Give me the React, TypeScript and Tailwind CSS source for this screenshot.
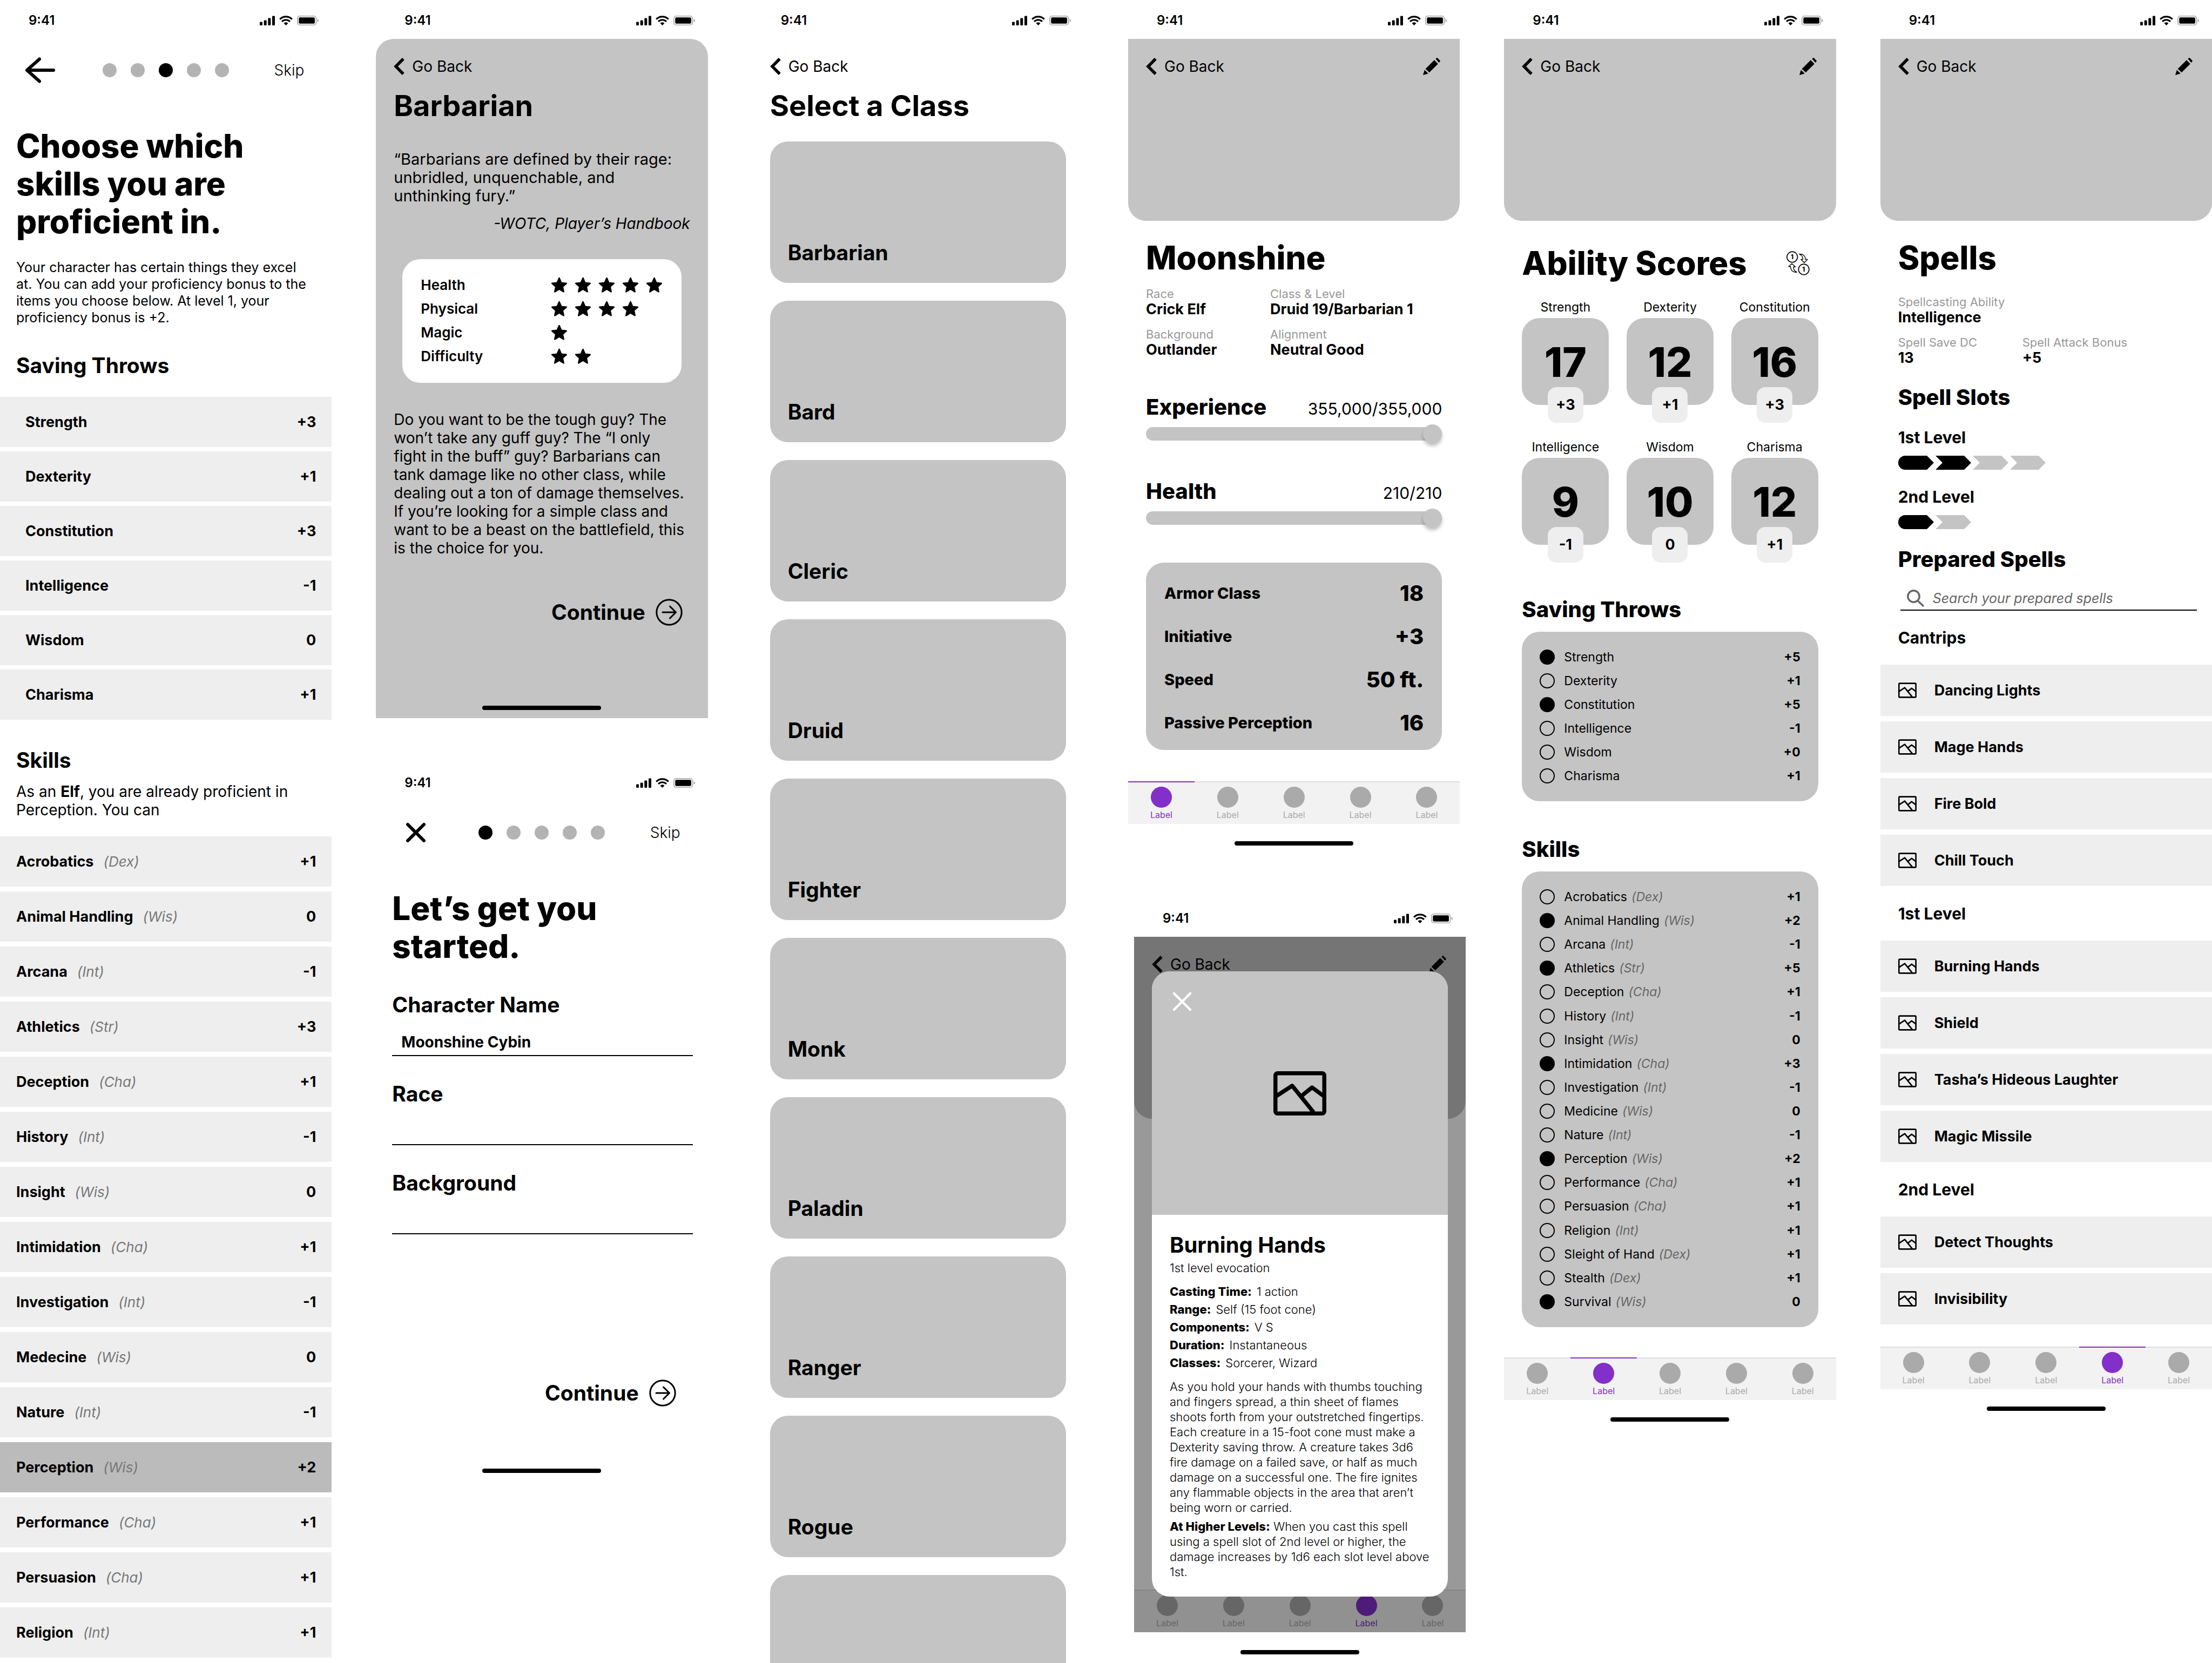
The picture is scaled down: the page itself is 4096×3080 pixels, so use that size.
import React from "react";

type Skill = { name: string; ability?: string; value: string; on?: boolean };

const savingThrowPicks: Skill[] = [
  { name: "Strength", value: "+3" },
  { name: "Dexterity", value: "+1" },
  { name: "Constitution", value: "+3" },
  { name: "Intelligence", value: "-1" },
  { name: "Wisdom", value: "0" },
  { name: "Charisma", value: "+1" },
];

const skillPicks: Skill[] = [
  { name: "Acrobatics", ability: "Dex", value: "+1" },
  { name: "Animal Handling", ability: "Wis", value: "0" },
  { name: "Arcana", ability: "Int", value: "-1" },
  { name: "Athletics", ability: "Str", value: "+3" },
  { name: "Deception", ability: "Cha", value: "+1" },
  { name: "History", ability: "Int", value: "-1" },
  { name: "Insight", ability: "Wis", value: "0" },
  { name: "Intimidation", ability: "Cha", value: "+1" },
  { name: "Investigation", ability: "Int", value: "-1" },
  { name: "Medecine", ability: "Wis", value: "0" },
  { name: "Nature", ability: "Int", value: "-1" },
  { name: "Perception", ability: "Wis", value: "+2", on: true },
  { name: "Performance", ability: "Cha", value: "+1" },
  { name: "Persuasion", ability: "Cha", value: "+1" },
  { name: "Religion", ability: "Int", value: "+1" },
];

const classes = ["Barbarian", "Bard", "Cleric", "Druid", "Fighter", "Monk", "Paladin", "Ranger", "Rogue"];

const ratings = [
  { label: "Health", stars: 5 },
  { label: "Physical", stars: 4 },
  { label: "Magic", stars: 1 },
  { label: "Difficulty", stars: 2 },
];

const combatStats = [
  { label: "Armor Class", value: "18" },
  { label: "Initiative", value: "+3" },
  { label: "Speed", value: "50 ft." },
  { label: "Passive Perception", value: "16" },
];

const abilities = [
  { label: "Strength", score: "17", mod: "+3" },
  { label: "Dexterity", score: "12", mod: "+1" },
  { label: "Constitution", score: "16", mod: "+3" },
  { label: "Intelligence", score: "9", mod: "-1" },
  { label: "Wisdom", score: "10", mod: "0" },
  { label: "Charisma", score: "12", mod: "+1" },
];

const savingThrows: Skill[] = [
  { name: "Strength", value: "+5", on: true },
  { name: "Dexterity", value: "+1" },
  { name: "Constitution", value: "+5", on: true },
  { name: "Intelligence", value: "-1" },
  { name: "Wisdom", value: "+0" },
  { name: "Charisma", value: "+1" },
];

const skills: Skill[] = [
  { name: "Acrobatics", ability: "Dex", value: "+1" },
  { name: "Animal Handling", ability: "Wis", value: "+2", on: true },
  { name: "Arcana", ability: "Int", value: "-1" },
  { name: "Athletics", ability: "Str", value: "+5", on: true },
  { name: "Deception", ability: "Cha", value: "+1" },
  { name: "History", ability: "Int", value: "-1" },
  { name: "Insight", ability: "Wis", value: "0" },
  { name: "Intimidation", ability: "Cha", value: "+3", on: true },
  { name: "Investigation", ability: "Int", value: "-1" },
  { name: "Medicine", ability: "Wis", value: "0" },
  { name: "Nature", ability: "Int", value: "-1" },
  { name: "Perception", ability: "Wis", value: "+2", on: true },
  { name: "Performance", ability: "Cha", value: "+1" },
  { name: "Persuasion", ability: "Cha", value: "+1" },
  { name: "Religion", ability: "Int", value: "+1" },
  { name: "Sleight of Hand", ability: "Dex", value: "+1" },
  { name: "Stealth", ability: "Dex", value: "+1" },
  { name: "Survival", ability: "Wis", value: "0", on: true },
];

const spellGroups = [
  { title: "Cantrips", spells: ["Dancing Lights", "Mage Hands", "Fire Bold", "Chill Touch"] },
  { title: "1st Level", spells: ["Burning Hands", "Shield", "Tasha’s Hideous Laughter", "Magic Missile"] },
  { title: "2nd Level", spells: ["Detect Thoughts", "Invisibility"] },
];

const spellFacts = [
  { label: "Casting Time:", value: "1 action" },
  { label: "Range:", value: "Self (15 foot cone)" },
  { label: "Components:", value: "V S" },
  { label: "Duration:", value: "Instantaneous" },
  { label: "Classes:", value: "Sorcerer, Wizard" },
];

/* ---------- icons ---------- */

function ArrowLeftIcon() {
  return (
    <svg className="h-[48px] w-[56px]" viewBox="0 0 56 48" fill="none" stroke="#000" strokeWidth="6" strokeLinecap="round" strokeLinejoin="round" aria-hidden="true">
      <path d="M27 3.5 4 24l23 20.5M5 24h48" />
    </svg>
  );
}

function CrossIcon({ color, weight }: { color: string; weight: number }) {
  return (
    <svg className="size-[38px]" viewBox="0 0 38 38" fill="none" stroke={color} strokeWidth={weight} strokeLinecap="round" aria-hidden="true">
      <path d="M4 4l30 30M34 4 4 34" />
    </svg>
  );
}

function ChevronIcon() {
  return (
    <svg className="h-[32px] w-[20px]" viewBox="0 0 20 32" fill="none" stroke="#000" strokeWidth="5.5" aria-hidden="true">
      <path d="M17.8 2 4 16l13.8 14" />
    </svg>
  );
}

function PencilIcon() {
  return (
    <svg className="size-[32px]" viewBox="0 0 32 32" fill="#000" aria-hidden="true">
      <path d="M20.9 4.2l6.9 7L11.7 27.2l-7.1-6.7zM23.4 2.1l1.6-1.6q1-1 2 0l4.4 4.6q.9 1 0 1.9l-1.9 1.9zM2.9 22.4l6.9 6.8L0 32z" />
    </svg>
  );
}

function ArrowCircleIcon() {
  return (
    <svg className="size-[50px]" viewBox="0 0 50 50" fill="none" stroke="#000" strokeWidth="3" strokeLinecap="round" strokeLinejoin="round" aria-hidden="true">
      <circle cx="25" cy="25" r="23.2" />
      <path d="M13 25h24.5M26.5 14 37.5 25l-11 11" />
    </svg>
  );
}

function StarIcon() {
  return (
    <svg className="size-[31px]" viewBox="0 0 31 31" fill="#000" stroke="#000" strokeWidth="2.6" strokeLinejoin="round" aria-hidden="true">
      <path d="M15.5 2l3.8 8.7 9.5 1-7.1 6.3 2 9.3-8.2-4.8-8.2 4.8 2-9.3-7.1-6.3 9.5-1z" />
    </svg>
  );
}

function ImageIcon({ className }: { className: string }) {
  return (
    <svg className={className} viewBox="0 0 98 82" fill="none" stroke="#000" strokeWidth="7.5" strokeLinejoin="round" aria-hidden="true">
      <rect x="3.75" y="3.75" width="90.5" height="74.5" rx="4" />
      <path d="M4 47l30.700-20.200L74.400 76M51.400 46.400 71.500 30 94.500 47" />
    </svg>
  );
}

function SearchIcon() {
  return (
    <svg className="size-[32px]" viewBox="0 0 32 32" fill="none" stroke="#666" strokeWidth="3.4" aria-hidden="true">
      <circle cx="12.500" cy="12.500" r="10.700" />
      <path d="M20 20.500l11 10.500" />
    </svg>
  );
}

function SwapIcon() {
  return (
    <svg className="h-[45px] w-[43px]" viewBox="53 53 158 164" fill="none" stroke="#000" strokeWidth="6" strokeLinejoin="round" aria-hidden="true">
      <circle cx="92.500" cy="92.500" r="36" />
      <circle cx="171" cy="177" r="36" />
      <path strokeWidth="5" d="M140 73c24-3 42 12 42 36h14l-22 22-22-22h13c0-16-8-29-25-36zM124 196c-25 3-43-12-43-38H68l22-20 24 22h-13c-1 16 7 29 23 36z" />
      <text x="92" y="107" textAnchor="middle" fill="#000" stroke="none" fontFamily="Inter, sans-serif" fontWeight="800" fontSize="42">1</text>
      <text x="170" y="191" textAnchor="middle" fill="#000" stroke="none" fontFamily="Inter, sans-serif" fontWeight="800" fontSize="42">1</text>
    </svg>
  );
}

function SlotShape({ first, filled }: { first: boolean; filled: boolean }) {
  return (
    <svg className="h-[26px] w-[66px]" viewBox="0 0 66 26" fill={filled ? "#000" : "#c4c4c4"} aria-hidden="true">
      <path d={first ? "M13 0h40l13 13-13 13H13A13 13 0 0 1 13 0z" : "M0 0h53l13 13-13 13H0l13-13z"} />
    </svg>
  );
}

/* ---------- shared pieces ---------- */

function StatusBar() {
  return (
    <div className="flex h-[72px] items-center justify-between pt-[3px] pr-[24px] pl-[53px]">
      <span className="text-[24px] leading-[30px] font-semibold">9:41</span>
      <div className="flex items-center gap-[8px]">
        <svg className="h-[18px] w-[28px]" viewBox="0 0 28 18" aria-hidden="true">
          <rect x="0" y="11.500" width="5" height="6.500" rx="1.300" />
          <rect x="7.700" y="8.500" width="5" height="9.500" rx="1.300" />
          <rect x="15.300" y="4.500" width="5" height="13.500" rx="1.300" />
          <rect x="23" y="0.500" width="5" height="17.500" rx="1.300" />
        </svg>
        <svg className="h-[18px] w-[25px]" viewBox="0 0 25 18" fill="none" stroke="#000" strokeWidth="3.100" aria-hidden="true">
          <path d="M1.200 6.600A15.800 15.800 0 0 1 23.800 6.600M5.100 11A10.200 10.200 0 0 1 19.900 11" />
          <path d="M12.500 18 8.500 14A5.600 5.600 0 0 1 16.500 14z" fill="#000" stroke="none" />
        </svg>
        <svg className="h-[18px] w-[40px]" viewBox="0 0 40 18" aria-hidden="true">
          <rect x="0.800" y="0.800" width="34.600" height="16.400" rx="4.200" fill="none" stroke="#a6a6a6" strokeWidth="1.600" />
          <rect x="3.300" y="3.300" width="29.600" height="11.400" rx="2" />
          <path d="M37.500 6v6q2.500-.8 2.500-3t-2.500-3z" fill="#a6a6a6" />
        </svg>
      </div>
    </div>
  );
}

function HomeIndicator() {
  return <div className="mx-auto h-[8px] w-[220px] rounded-full bg-black" />;
}

function GoBack() {
  return (
    <button type="button" className="flex h-[36px] items-center gap-[14px] text-[28px] leading-[36px]">
      <ChevronIcon />
      Go Back
    </button>
  );
}

function StepNav({ icon, label, step }: { icon: React.ReactNode; label: string; step: number }) {
  return (
    <nav className="grid h-[114px] grid-cols-[1fr_auto_1fr] items-center px-[46px] pt-[2px]">
      <button type="button" aria-label={label} className="flex w-[56px] justify-center">{icon}</button>
      <ol className="flex gap-[26px]">
        {[0, 1, 2, 3, 4].map((i) => (
          <li key={i} className={i === step ? "size-[26px] rounded-full bg-black" : "size-[26px] rounded-full bg-[#b3b3b3]"} />
        ))}
      </ol>
      <button type="button" className="justify-self-end pr-[5px] text-[28px] leading-[36px] font-light">Skip</button>
    </nav>
  );
}

function HeroHeader() {
  return (
    <header className="flex h-[337px] items-start justify-between rounded-b-[33px] bg-[#c4c4c4] pt-[33px] pr-[36px] pl-[33px]">
      <GoBack />
      <button type="button" aria-label="Edit" className="flex h-[36px] items-center">
        <PencilIcon />
      </button>
    </header>
  );
}

function TabBar({ active }: { active: number }) {
  return (
    <nav className="grid h-[79px] grid-cols-5 bg-[#f2f2f2]">
      {[0, 1, 2, 3, 4].map((i) => (
        <button
          key={i}
          type="button"
          className={
            i === active
              ? "flex flex-col items-center border-t-2 border-[#832fc9] pt-[8px] text-[#832fc9]"
              : "flex flex-col items-center border-t-2 border-[#dedede] pt-[8px] text-[#aaa]"
          }
        >
          <span className="size-[39px] rounded-full bg-current" />
          <span className="mt-[3px] text-[16px] leading-[20px]">Label</span>
        </button>
      ))}
    </nav>
  );
}

function ContinueButton() {
  return (
    <button type="button" className="flex h-[50px] items-center gap-[19px] text-[39px] leading-[48px] font-bold">
      Continue
      <ArrowCircleIcon />
    </button>
  );
}

function PickRow({ skill, inset }: { skill: Skill; inset?: boolean }) {
  return (
    <li>
      <button
        type="button"
        aria-pressed={!!skill.on}
        className={
          (skill.on ? "bg-[#bbb] " : "bg-[#eee] ") +
          (inset ? "pl-[47px] " : "pl-[30px] ") +
          "flex h-[93px] w-full items-center pr-[29px] text-[27px] leading-[32px] font-bold"
        }
      >
        <span>{skill.name}</span>
        {skill.ability && <em className="ml-[18px] text-[26px] font-normal text-[#777]">({skill.ability})</em>}
        <span className="ml-auto">{skill.value}</span>
      </button>
    </li>
  );
}

function CheckRow({ skill, group }: { skill: Skill; group: string }) {
  const id = group + "-" + skill.name.replace(/ /g, "-");
  return (
    <li className="flex h-[28px] items-center text-[23px] leading-[28px]">
      <input
        id={id}
        type="checkbox"
        defaultChecked={skill.on}
        className="size-[28px] appearance-none rounded-full border-2 border-black checked:bg-black"
      />
      <label htmlFor={id} className="ml-[17px] flex gap-[8px]">
        {skill.name}
        {skill.ability && <em className="text-[#666]">({skill.ability})</em>}
      </label>
      <span className="ml-auto font-bold">{skill.value}</span>
    </li>
  );
}

function Fact({ label, value }: { label: string; value: string }) {
  return (
    <div>
      <dt className="text-[22px] leading-[28px] text-[#999]">{label}</dt>
      <dd className="text-[27px] leading-[30px] font-bold">{value}</dd>
    </div>
  );
}

function Meter({ id, label, value, max }: { id: string; label: string; value: string; max: number }) {
  return (
    <div className="px-[33px]">
      <div className="flex h-[48px] items-baseline justify-between">
        <label htmlFor={id} className="text-[40px] leading-[48px] font-extrabold">{label}</label>
        <output className="text-[30px] leading-[40px]">{value}</output>
      </div>
      <input
        id={id}
        type="range"
        min={0}
        max={max}
        defaultValue={max}
        className="mt-[8px] block h-[35px] w-full appearance-none bg-transparent [&::-webkit-slider-runnable-track]:h-[25px] [&::-webkit-slider-runnable-track]:rounded-full [&::-webkit-slider-runnable-track]:bg-[#c4c4c4] [&::-webkit-slider-thumb]:-mt-[5px] [&::-webkit-slider-thumb]:size-[35px] [&::-webkit-slider-thumb]:appearance-none [&::-webkit-slider-thumb]:rounded-full [&::-webkit-slider-thumb]:bg-[#c4c4c4] [&::-webkit-slider-thumb]:shadow-[0_5px_6px_rgba(0,0,0,0.25)]"
      />
    </div>
  );
}

function Field({ id, label, value }: { id: string; label: string; value?: string }) {
  return (
    <div>
      <label htmlFor={id} className="block text-[39px] leading-[48px] font-bold">{label}</label>
      <input
        id={id}
        type="text"
        defaultValue={value}
        className="mt-[21px] block h-[50px] w-full border-b-2 border-black pl-[17px] text-[28px] leading-[32px] font-bold outline-none"
      />
    </div>
  );
}

function SlotRow({ title, total, filled }: { title: string; total: number; filled: number }) {
  return (
    <div className="mt-[32px]">
      <h3 className="text-[30px] leading-[36px] font-bold">{title}</h3>
      <div className="mt-[16px] flex gap-[3px]" role="img" aria-label={`${filled} of ${total} slots`}>
        {Array.from({ length: total }, (_, i) => (
          <SlotShape key={i} first={i === 0} filled={i < filled} />
        ))}
      </div>
    </div>
  );
}

/* ---------- screens ---------- */

function SkillPickerScreen() {
  return (
    <section>
      <StatusBar />
      <StepNav icon={<ArrowLeftIcon />} label="Back" step={2} />
      <h1 className="mt-[49px] px-[30px] text-[60px] leading-[70px] font-extrabold">
        Choose which
        <br />
        skills you are
        <br />
        proficient in.
      </h1>
      <p className="mt-[35px] px-[30px] text-[25px] leading-[31px]">
        Your character has certain things they excel
        <br />
        at. You can add your proficiency bonus to the
        <br />
        items you choose below. At level 1, your
        <br />
        proficiency bonus is +2.
      </p>
      <h2 className="mt-[49px] mb-[34px] px-[30px] text-[39px] leading-[48px] font-bold">Saving Throws</h2>
      <ul className="flex flex-col gap-[8px]">
        {savingThrowPicks.map((s) => (
          <PickRow key={s.name} skill={s} inset />
        ))}
      </ul>
      <h2 className="mt-[51px] px-[30px] text-[39px] leading-[48px] font-bold">Skills</h2>
      <p className="mt-[17px] mb-[32px] px-[30px] text-[28px] leading-[34px]">
        As an <b>Elf</b>, you are already proficient in
        <br />
        Perception. You can
      </p>
      <ul className="flex flex-col gap-[9px]">
        {skillPicks.map((s) => (
          <PickRow key={s.name} skill={s} />
        ))}
      </ul>
    </section>
  );
}

function ClassDetailScreen() {
  return (
    <section>
      <StatusBar />
      <div className="rounded-t-[33px] bg-[#c4c4c4] px-[33px] pt-[33px] pb-[15px]">
        <GoBack />
        <h1 className="mt-[22px] text-[54px] leading-[66px] font-bold">Barbarian</h1>
        <blockquote className="mt-[49px] text-[29px] leading-[34px]">
          “Barbarians are defined by their rage:
          <br />
          unbridled, unquenchable, and
          <br />
          unthinking fury.”
          <footer className="mt-[17px] text-right text-[28px] italic">-WOTC, Player’s Handbook</footer>
        </blockquote>
        <dl className="mx-[16px] mt-[49px] rounded-[33px] bg-white px-[34px] pt-[26px] pb-[27px]">
          {ratings.map((r) => (
            <div key={r.label} className="flex h-[44px] items-center">
              <dt className="w-[241px] text-[26px] leading-[32px] font-semibold">{r.label}</dt>
              <dd className="flex gap-[13px]" aria-label={`${r.stars} of 5`}>
                {Array.from({ length: r.stars }, (_, i) => (
                  <StarIcon key={i} />
                ))}
              </dd>
            </div>
          ))}
        </dl>
        <p className="mt-[51px] text-[28px] leading-[34px]">
          Do you want to be the tough guy? The
          <br />
          won’t take any guff guy? The “I only
          <br />
          fight in the buff” guy? Barbarians can
          <br />
          tank damage like no other class, while
          <br />
          dealing out a ton of damage themselves.
          <br />
          If you’re looking for a simple class and
          <br />
          want to be a beast on the battlefield, this
          <br />
          is the choice for you.
        </p>
        <div className="mt-[77px] mb-[148px] flex justify-end pr-[14px]">
          <ContinueButton />
        </div>
        <HomeIndicator />
      </div>
    </section>
  );
}

function GetStartedScreen() {
  return (
    <section>
      <StatusBar />
      <StepNav icon={<CrossIcon color="#000" weight={6} />} label="Close" step={0} />
      <form className="pr-[28px] pl-[30px]">
        <h1 className="mt-[49px] mb-[50px] text-[60px] leading-[70px] font-extrabold">
          Let’s get you
          <br />
          started.
        </h1>
        <div className="flex flex-col gap-[46px]">
          <Field id="character-name" label="Character Name" value="Moonshine Cybin" />
          <Field id="race" label="Race" />
          <Field id="background" label="Background" />
        </div>
        <div className="mt-[269px] mb-[115px] flex justify-end pr-[31px]">
          <ContinueButton />
        </div>
      </form>
      <HomeIndicator />
    </section>
  );
}

function ClassListScreen() {
  return (
    <section>
      <StatusBar />
      <div className="px-[33px] pt-[33px]">
        <GoBack />
        <h1 className="mt-[22px] text-[54px] leading-[66px] font-bold">Select a Class</h1>
        <ul className="mt-[33px] flex flex-col gap-[33px]">
          {classes.map((c) => (
            <li key={c}>
              <button type="button" className="flex h-[262px] w-full items-end rounded-[33px] bg-[#c4c4c4] pb-[32px] pl-[33px] text-[39px] leading-[48px] font-bold">
                {c}
              </button>
            </li>
          ))}
          <li>
            <button type="button" aria-label="More classes" className="block h-[262px] w-full rounded-[33px] bg-[#c4c4c4]" />
          </li>
        </ul>
      </div>
    </section>
  );
}

function CharacterScreen() {
  return (
    <section>
      <StatusBar />
      <HeroHeader />
      <h1 className="mt-[33px] px-[33px] text-[60px] leading-[70px] font-extrabold">Moonshine</h1>
      <dl className="mt-[18px] mb-[67px] grid grid-cols-[230px_1fr] gap-y-[17px] px-[33px]">
        <Fact label="Race" value="Crick Elf" />
        <Fact label="Class &amp; Level" value="Druid 19/Barbarian 1" />
        <Fact label="Background" value="Outlander" />
        <Fact label="Alignment" value="Neutral Good" />
      </dl>
      <div className="flex flex-col gap-[65px]">
        <Meter id="experience" label="Experience" value="355,000/355,000" max={355000} />
        <Meter id="health" label="Health" value="210/210" max={210} />
      </div>
      <dl className="mx-[33px] mt-[65px] mb-[58px] rounded-[33px] bg-[#c4c4c4] px-[34px] pt-[17px] pb-[10px] font-extrabold">
        {combatStats.map((s) => (
          <div key={s.label} className="flex h-[80px] items-center justify-between">
            <dt className="text-[29px] leading-[36px]">{s.label}</dt>
            <dd className="text-[40px] leading-[48px]">{s.value}</dd>
          </div>
        ))}
      </dl>
      <TabBar active={0} />
      <div className="mt-[32px]">
        <HomeIndicator />
      </div>
    </section>
  );
}

function SpellDialogScreen() {
  return (
    <section className="-mr-[11px] ml-[11px]">
      <StatusBar />
      <div className="relative flex h-[1288px] flex-col justify-between">
        <HeroHeader />
        <TabBar active={3} />
        <div className="absolute inset-0 bg-black/40" />
        <div role="dialog" aria-labelledby="spell-title" className="absolute inset-x-[33px] top-[64px] rounded-[33px] bg-white">
          <div className="relative flex h-[451px] items-center justify-center rounded-t-[33px] bg-[#c4c4c4]">
            <button type="button" aria-label="Close" className="absolute top-[37px] left-[37px]">
              <CrossIcon color="#fff" weight={4.5} />
            </button>
            <ImageIcon className="h-[82px] w-[98px]" />
          </div>
          <div className="px-[33px] pt-[32px] pb-[32px] text-[22px] leading-[28px] font-light">
            <h2 id="spell-title" className="text-[40px] leading-[48px] font-bold">Burning Hands</h2>
            <p className="mt-[4px]">1st level evocation</p>
            <dl className="mt-[14px] leading-[33px]">
              {spellFacts.map((f) => (
                <div key={f.label} className="flex gap-[9px]">
                  <dt className="font-extrabold">{f.label}</dt>
                  <dd>{f.value}</dd>
                </div>
              ))}
            </dl>
            <p className="mt-[13px]">
              As you hold your hands with thumbs touching
              <br />
              and fingers spread, a thin sheet of flames
              <br />
              shoots forth from your outstretched fingertips.
              <br />
              Each creature in a 15-foot cone must make a
              <br />
              Dexterity saving throw. A creature takes 3d6
              <br />
              fire damage on a failed save, or half as much
              <br />
              damage on a successful one. The fire ignites
              <br />
              any flammable objects in the area that aren’t
              <br />
              being worn or carried.
            </p>
            <p className="mt-[7px]">
              <b className="font-extrabold">At Higher Levels:</b> When you cast this spell
              <br />
              using a spell slot of 2nd level or higher, the
              <br />
              damage increases by 1d6 each slot level above
              <br />
              1st.
            </p>
          </div>
        </div>
      </div>
      <div className="mt-[33px]">
        <HomeIndicator />
      </div>
    </section>
  );
}

function AbilityScreen() {
  return (
    <section>
      <StatusBar />
      <HeroHeader />
      <div className="px-[33px]">
        <div className="mt-[43px] flex items-center justify-between pr-[16px]">
          <h1 className="text-[60px] leading-[70px] font-extrabold">Ability Scores</h1>
          <button type="button" aria-label="Swap scores">
            <SwapIcon />
          </button>
        </div>
        <ul className="mt-[33px] grid grid-cols-[161px_161px_161px] justify-between gap-y-[31px]">
          {abilities.map((a) => (
            <li key={a.label} className="flex flex-col items-center">
              <span className="text-[23px] leading-[28px]">{a.label}</span>
              <span className="mt-[6px] flex h-[161px] w-full items-center justify-center rounded-[33px] bg-[#c4c4c4] text-[76px] leading-[90px] font-extrabold">
                {a.score}
              </span>
              <span className="-mt-[33px] flex size-[66px] items-center justify-center rounded-[16px] bg-[#eee] text-[27px] leading-[32px] font-bold">
                {a.mod}
              </span>
            </li>
          ))}
        </ul>
        <h2 className="mt-[63px] text-[40px] leading-[48px] font-extrabold">Saving Throws</h2>
        <ul className="mt-[17px] flex h-[314px] flex-col justify-between rounded-[33px] bg-[#c4c4c4] px-[33px] py-[33px]">
          {savingThrows.map((s) => (
            <CheckRow key={s.name} skill={s} group="save" />
          ))}
        </ul>
        <h2 className="mt-[65px] text-[40px] leading-[48px] font-extrabold">Skills</h2>
        <ul className="mt-[17px] mb-[56px] flex h-[844px] flex-col justify-between rounded-[33px] bg-[#c4c4c4] px-[33px] py-[33px]">
          {skills.map((s) => (
            <CheckRow key={s.name} skill={s} group="skill" />
          ))}
        </ul>
      </div>
      <TabBar active={1} />
      <div className="mt-[32px]">
        <HomeIndicator />
      </div>
    </section>
  );
}

function SpellsScreen() {
  return (
    <section>
      <StatusBar />
      <HeroHeader />
      <div className="px-[33px]">
        <h1 className="mt-[33px] text-[60px] leading-[70px] font-extrabold">Spells</h1>
        <dl className="mt-[33px] grid grid-cols-[230px_1fr] gap-y-[17px]">
          <div className="col-span-2">
            <Fact label="Spellcasting Ability" value="Intelligence" />
          </div>
          <Fact label="Spell Save DC" value="13" />
          <Fact label="Spell Attack Bonus" value="+5" />
        </dl>
        <h2 className="mt-[34px] text-[40px] leading-[48px] font-extrabold">Spell Slots</h2>
        <SlotRow title="1st Level" total={4} filled={2} />
        <SlotRow title="2nd Level" total={2} filled={1} />
        <h2 className="mt-[32px] text-[40px] leading-[48px] font-extrabold">Prepared Spells</h2>
      </div>
      <label className="mt-[27px] mr-[28px] ml-[37px] flex h-[44px] items-center gap-[16px] border-b-2 border-black pl-[12px]">
        <SearchIcon />
        <input
          type="search"
          aria-label="Search your prepared spells"
          placeholder="Search your prepared spells"
          className="min-w-0 flex-1 text-[25px] leading-[32px] italic outline-none placeholder:text-[#666]"
        />
      </label>
      {spellGroups.map((g) => (
        <div key={g.title} className="mt-[32px]">
          <h3 className="px-[33px] text-[30px] leading-[36px] font-bold">{g.title}</h3>
          <ul className="mt-[32px] flex flex-col gap-[10px] pb-px">
            {g.spells.map((s) => (
              <li key={s}>
                <button type="button" className="flex h-[95px] w-full items-center gap-[33px] bg-[#eee] pl-[33px] text-[27px] leading-[32px] font-bold">
                  <ImageIcon className="h-[29px] w-[34px]" />
                  {s}
                </button>
              </li>
            ))}
          </ul>
        </div>
      ))}
      <div className="mt-[40px]">
        <TabBar active={3} />
      </div>
      <div className="mt-[32px]">
        <HomeIndicator />
      </div>
    </section>
  );
}

export default function App() {
  return (
    <main className="grid h-screen grid-cols-6 items-start gap-[82px] overflow-hidden bg-white font-['Inter','Liberation_Sans',sans-serif] text-black">
      <SkillPickerScreen />
      <div className="flex flex-col gap-[82px]">
        <ClassDetailScreen />
        <GetStartedScreen />
      </div>
      <ClassListScreen />
      <div className="flex flex-col gap-[97px]">
        <CharacterScreen />
        <SpellDialogScreen />
      </div>
      <AbilityScreen />
      <SpellsScreen />
    </main>
  );
}
